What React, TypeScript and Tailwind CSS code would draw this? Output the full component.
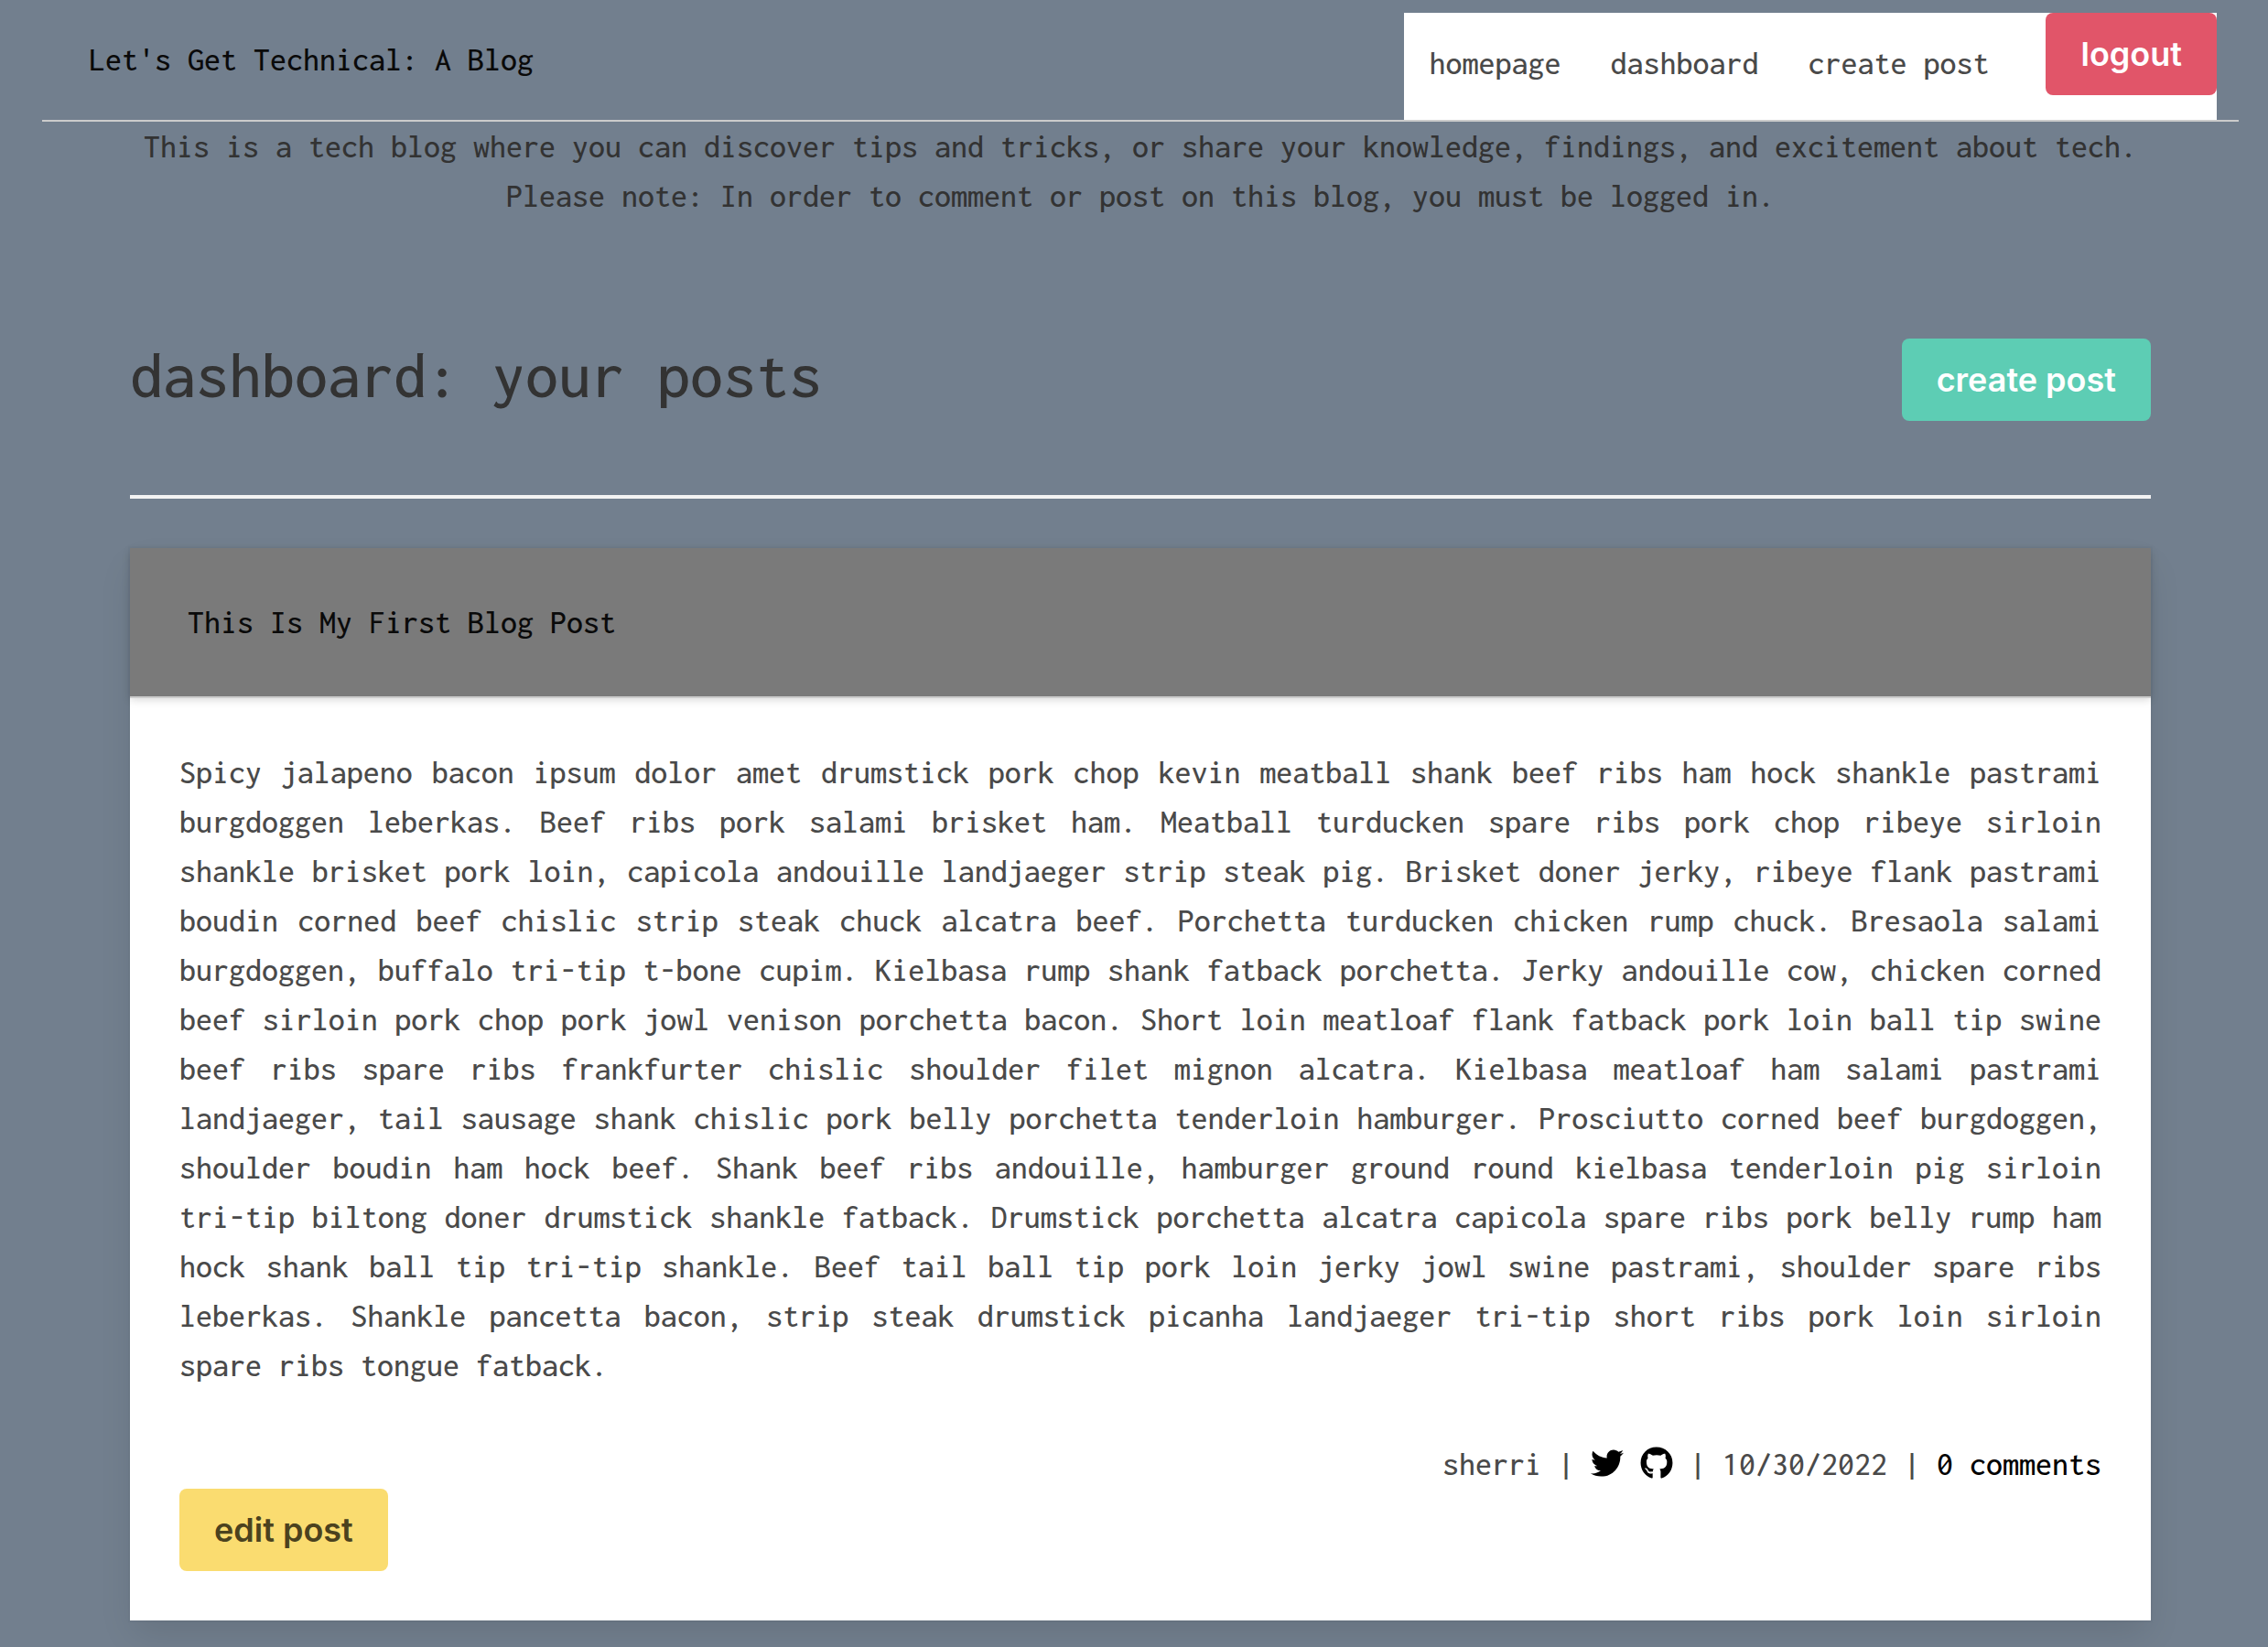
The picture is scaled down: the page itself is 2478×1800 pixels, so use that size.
import { FaGithub, FaTwitter } from "react-icons/fa";
import type { ReactNode } from "react";

const body =
  "Spicy jalapeno bacon ipsum dolor amet drumstick pork chop kevin meatball shank beef ribs ham hock shankle pastrami burgdoggen leberkas. Beef ribs pork salami brisket ham. Meatball turducken spare ribs pork chop ribeye sirloin shankle brisket pork loin, capicola andouille landjaeger strip steak pig. Brisket doner jerky, ribeye flank pastrami boudin corned beef chislic strip steak chuck alcatra beef. Porchetta turducken chicken rump chuck. Bresaola salami burgdoggen, buffalo tri-tip t-bone cupim. Kielbasa rump shank fatback porchetta. Jerky andouille cow, chicken corned beef sirloin pork chop pork jowl venison porchetta bacon. Short loin meatloaf flank fatback pork loin ball tip swine beef ribs spare ribs frankfurter chislic shoulder filet mignon alcatra. Kielbasa meatloaf ham salami pastrami landjaeger, tail sausage shank chislic pork belly porchetta tenderloin hamburger. Prosciutto corned beef burgdoggen, shoulder boudin ham hock beef. Shank beef ribs andouille, hamburger ground round kielbasa tenderloin pig sirloin tri-tip biltong doner drumstick shankle fatback. Drumstick porchetta alcatra capicola spare ribs pork belly rump ham hock shank ball tip tri-tip shankle. Beef tail ball tip pork loin jerky jowl swine pastrami, shoulder spare ribs leberkas. Shankle pancetta bacon, strip steak drumstick picanha landjaeger tri-tip short ribs pork loin sirloin spare ribs tongue fatback.";

function Button({ color, children }: { color: string; children: ReactNode }) {
  return (
    <button
      type="button"
      className={`h-[90px] shrink-0 rounded-lg px-[38px] font-['Inter',sans-serif] text-[36px] font-semibold whitespace-nowrap ${color}`}
    >
      {children}
    </button>
  );
}

export default function App() {
  return (
    <div className="min-h-screen bg-[#727f8e] font-['Inconsolata','Liberation_Mono',monospace] text-[36px] leading-[54px] font-medium text-[#333333]">
      <header className="mr-8 ml-[46px] flex items-start justify-between border-b-2 border-[#cccccc] pt-[14px] pr-6 pl-[51px]">
        <a href="#home" className="pt-6 text-[#0a0a0a]">
          Let's Get Technical: A Blog
        </a>
        <nav className="flex h-[117px] items-start bg-white pl-[27px] text-[#4a4a4a]">
          <div className="flex gap-[54px] pt-7 pr-[62px]">
            <a href="#homepage">homepage</a>
            <a href="#dashboard">dashboard</a>
            <a href="#create">create post</a>
          </div>
          <Button color="bg-[#e15569] text-white">logout</Button>
        </nav>
      </header>

      <p className="mr-8 ml-[46px] text-center">
        This is a tech blog where you can discover tips and tricks, or share your knowledge, findings, and excitement about tech.
        <br />
        Please note: In order to comment or post on this blog, you must be logged in.
      </p>

      <main className="mr-32 ml-[142px] pt-[129px]">
        <div className="flex items-start justify-between border-b-4 border-[#f2f2f2] pb-[81px]">
          <h1 className="text-[72px] leading-[81px]">dashboard: your posts</h1>
          <Button color="bg-[#5dcdb4] text-white">create post</Button>
        </div>

        <article className="mt-[54px] bg-white text-[#4a4a4a] shadow-[0_18px_36px_-4px_rgba(10,10,10,0.1),0_0_0_2px_rgba(10,10,10,0.02)]">
          <h2 className="bg-[#7a7a7a] py-[54px] pl-[63px] text-[#0a0a0a] shadow-[0_2px_0_#cccccc,0_4px_9px_rgba(10,10,10,0.15)]">
            <a href="#post">This Is My First Blog Post</a>
          </h2>
          <div className="px-[54px] pt-14 pb-[54px]">
            <p className="text-justify">{body}</p>
            <div className="mt-[54px] flex items-center justify-end gap-[18px]">
              <span>sherri</span>
              <span>|</span>
              <a href="#twitter" aria-label="Twitter" className="text-black">
                <FaTwitter className="mb-0.5 size-9" />
              </a>
              <a href="#github" aria-label="GitHub" className="text-black">
                <FaGithub className="mb-0.5 size-9" />
              </a>
              <span>|</span>
              <span>10/30/2022</span>
              <span>|</span>
              <a href="#comments" className="text-black">
                0 comments
              </a>
            </div>
            <Button color="bg-[#fadc70] text-[#4b421e]">edit post</Button>
          </div>
        </article>
      </main>
    </div>
  );
}
